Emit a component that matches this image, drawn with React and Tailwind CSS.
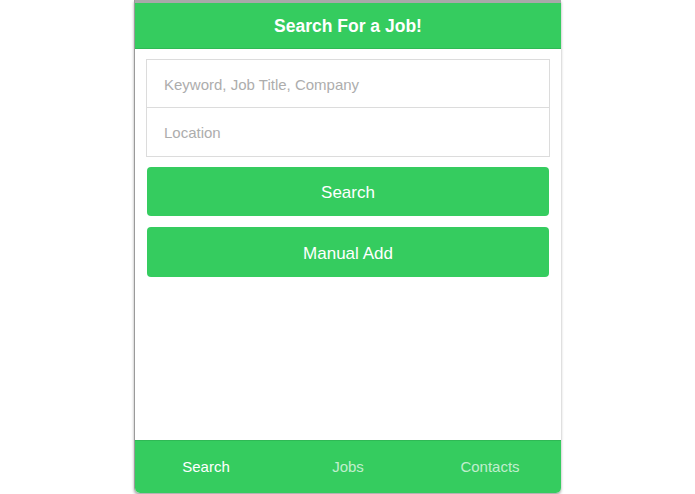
import React from "react";

function App() {
  const tabs = [
    { label: "Search", active: true },
    { label: "Jobs", active: false },
    { label: "Contacts", active: false },
  ];

  return (
    <div
      className="h-[494px] w-[695px] bg-white flex"
      style={{ fontFamily: '"Liberation Sans", Arial, sans-serif' }}
    >
      <div className="ml-[134px] w-[427px] h-[493px] flex flex-col border-l border-[#9a9a9a] shadow-[0_2px_3px_rgba(0,0,0,0.35)] rounded-b-[5px]">
        {/* Header */}
        <div className="h-[3px] bg-[#a9a9a9]" />
        <div className="h-[46px] bg-[#35cc5f] border-b border-[#2fb955] flex items-center justify-center pt-[2px]">
          <h1 className="text-white text-[17.5px] font-bold">Search For a Job!</h1>
        </div>

        {/* Form */}
        <div className="flex-1 bg-white px-[11px] pt-[10px] flex flex-col">
          <div className="border border-[#dcdcdc] flex flex-col">
            <div className="h-[48px] flex items-center px-[17px] pt-[3px] border-b border-[#dcdcdc] text-[15px] text-[#adadad]">
              Keyword, Job Title, Company
            </div>
            <div className="h-[48px] flex items-center px-[17px] pt-[3px] text-[15px] text-[#adadad]">
              Location
            </div>
          </div>
          <button className="mt-[10px] mx-[1px] h-[49px] rounded-[4px] bg-[#35cc5f] text-white text-[17px] pt-[2px]">
            Search
          </button>
          <button className="mt-[11px] mx-[1px] h-[50px] rounded-[4px] bg-[#35cc5f] text-white text-[17px] pt-[3px]">
            Manual Add
          </button>
        </div>

        {/* Tab bar */}
        <div className="h-[53px] bg-[#35cc5f] border-t border-[#2fb955] rounded-b-[5px] grid grid-cols-3 items-center">
          {tabs.map((t) => (
            <div
              key={t.label}
              className={
                "text-center text-[15px] " +
                (t.active ? "text-white" : "text-white/70")
              }
            >
              {t.label}
            </div>
          ))}
        </div>
      </div>
    </div>
  );
}

export default App;
